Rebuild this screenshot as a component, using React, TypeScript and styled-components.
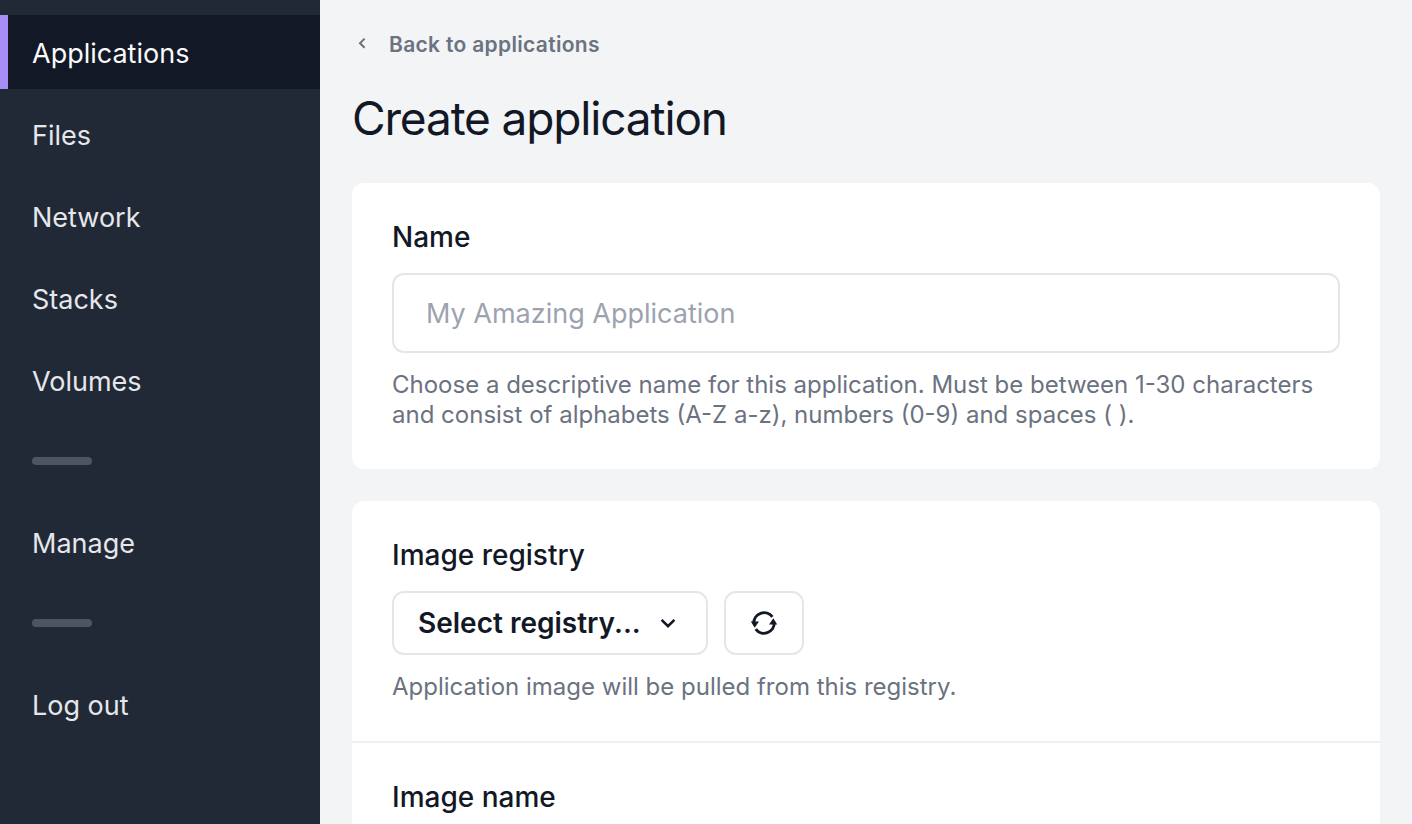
import React from "react";
import styled, { createGlobalStyle } from "styled-components";

const Global = createGlobalStyle`
  *, *::before, *::after { box-sizing: border-box; }
  body { margin: 0; background: #f2f4f6; color: #121826; font-family: Inter, "Liberation Sans", sans-serif; overflow: hidden; }
`;
const Layout = styled.div`
  display: flex;
  height: 100vh;
  overflow: hidden;
`;
const Sidebar = styled.nav`
  flex: 0 0 320px;
  background: #222936;
  padding-top: 15px;
  display: flex;
  flex-direction: column;
  gap: 8px;
`;
const NavLink = styled.a<{ $active?: boolean }>`
  display: flex;
  align-items: center;
  height: 74px;
  padding: 2px 24px 0;
  border-left: 8px solid ${(p) => (p.$active ? "#a58ef5" : "transparent")};
  background: ${(p) => (p.$active ? "#121826" : "transparent")};
  color: ${(p) => (p.$active ? "#f9fafb" : "#e5e7eb")};
  font-size: 27px;
  text-decoration: none;
`;
const Divider = styled.hr`
  width: 60px;
  height: 8px;
  margin: 32px;
  border: 0;
  border-radius: 4px;
  background: #4e5562;
`;
const Main = styled.main`
  flex: 1;
  min-width: 0;
  padding: 28px 32px 0;
`;
const BackLink = styled.a`
  display: flex;
  align-items: center;
  gap: 17px;
  height: 32px;
  color: #6b7280;
  font-size: 21px;
  font-weight: 600;
  letter-spacing: 0.015em;
  text-decoration: none;
`;
const Title = styled.h1`
  margin: 26px 0 32px;
  font-size: 46px;
  line-height: 65px;
  font-weight: 400;
  letter-spacing: -0.025em;
`;
const Card = styled.section`
  margin-bottom: 32px;
  border-radius: 12px;
  background: #fff;
`;
const Field = styled.div`
  padding: 35px 40px 39px;
  & + & { border-top: 2px solid #eeeff1; }
`;
const Label = styled.label`
  display: block;
  margin-bottom: 17px;
  font-size: 28px;
  line-height: 38px;
  font-weight: 500;
`;
const TextInput = styled.input`
  display: block;
  width: 100%;
  height: 80px;
  padding: 0 32px;
  border: 2px solid #e5e5eb;
  border-radius: 12px;
  background: #fff;
  color: inherit;
  font: inherit;
  font-size: 27px;
  &::placeholder { color: #9ca3af; }
`;
const Help = styled.p`
  margin: 17px 0 0;
  color: #6b7280;
  font-size: 24px;
  line-height: 30px;
`;
const Controls = styled.div`
  display: flex;
  gap: 16px;
`;
const SelectBox = styled.div`
  display: grid;
  align-items: center;
  width: 316px;
  & > * { grid-area: 1 / 1; }
  & > svg { justify-self: end; margin-right: 28px; pointer-events: none; }
`;
const Select = styled.select`
  width: 100%;
  height: 64px;
  padding: 0 24px;
  border: 2px solid #e5e5eb;
  border-radius: 12px;
  background: #fff;
  appearance: none;
  color: #121826;
  font: inherit;
  font-size: 28px;
  font-weight: 600;
`;
const IconButton = styled.button`
  display: flex;
  align-items: center;
  justify-content: center;
  width: 80px;
  height: 64px;
  padding: 0;
  border: 2px solid #e5e5eb;
  border-radius: 12px;
  background: #fff;
  color: #121826;
`;

const links = ["Applications", "Files", "Network", "Stacks", "Volumes"];

export default function App() {
  return (
    <>
      <Global />
      <Layout>
        <Sidebar>
          {links.map((l) => (
            <NavLink key={l} href="#" $active={l === "Applications"}>{l}</NavLink>
          ))}
          <Divider />
          <NavLink href="#">Manage</NavLink>
          <Divider />
          <NavLink href="#">Log out</NavLink>
        </Sidebar>
        <Main>
          <BackLink href="#">
            <svg width="20" height="20" viewBox="0 0 20 20" fill="none" stroke="currentColor" strokeWidth="2">
              <path d="M12.6 4.6 8 9.2l4.6 4.6" />
            </svg>
            Back to applications
          </BackLink>
          <Title>Create application</Title>
          <Card>
            <Field>
              <Label htmlFor="name">Name</Label>
              <TextInput id="name" placeholder="My Amazing Application" />
              <Help>
                Choose a descriptive name for this application. Must be between 1-30 characters and consist of alphabets (A-Z a-z), numbers (0-9) and spaces ( ).
              </Help>
            </Field>
          </Card>
          <Card>
            <Field>
              <Label htmlFor="registry">Image registry</Label>
              <Controls>
                <SelectBox>
                  <Select id="registry"><option>Select registry...</option></Select>
                  <svg width="24" height="24" viewBox="0 0 24 24" fill="none" stroke="currentColor" strokeWidth="2.6">
                    <path d="m5.6 8.8 6.4 6.4 6.4-6.4" />
                  </svg>
                </SelectBox>
                <IconButton type="button" aria-label="Refresh">
                  <svg width="28" height="28" viewBox="0 0 28 28" fill="none" stroke="currentColor" strokeWidth="3">
                    <path d="M3.8 14.4A10.3 10.3 0 0 1 22.3 7.8" />
                    <path d="M24.2 13.6A10.3 10.3 0 0 1 5.7 20.2" />
                    <path d="M.8 12.6h8.2L4.7 18.8z" fill="currentColor" stroke="none" />
                    <path d="M27.2 15.4h-8.2l4.3-6.2z" fill="currentColor" stroke="none" />
                  </svg>
                </IconButton>
              </Controls>
              <Help>Application image will be pulled from this registry.</Help>
            </Field>
            <Field>
              <Label htmlFor="image">Image name</Label>
              <TextInput id="image" />
            </Field>
          </Card>
        </Main>
      </Layout>
    </>
  );
}
